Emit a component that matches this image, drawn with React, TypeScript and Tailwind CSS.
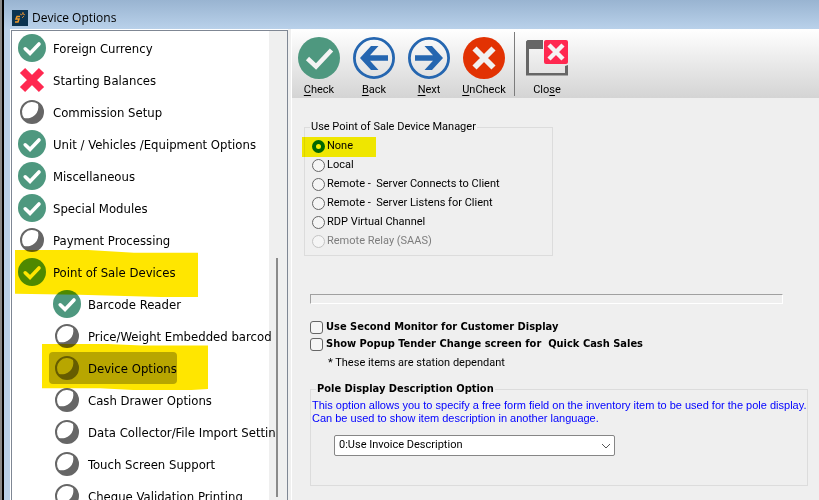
import React, { useState } from 'react';

type Status = 'done' | 'failed' | 'pending';

interface TreeItem {
  label: string;
  status: Status;
  child?: boolean;
}

const treeItems: TreeItem[] = [
  { label: 'Foreign Currency', status: 'done' },
  { label: 'Starting Balances', status: 'failed' },
  { label: 'Commission Setup', status: 'pending' },
  { label: 'Unit / Vehicles /Equipment Options', status: 'done' },
  { label: 'Miscellaneous', status: 'done' },
  { label: 'Special Modules', status: 'done' },
  { label: 'Payment Processing', status: 'pending' },
  { label: 'Point of Sale Devices', status: 'done' },
  { label: 'Barcode Reader', status: 'done', child: true },
  { label: 'Price/Weight Embedded barcod', status: 'pending', child: true },
  { label: 'Device Options', status: 'pending', child: true },
  { label: 'Cash Drawer Options', status: 'pending', child: true },
  { label: 'Data Collector/File Import Settin', status: 'pending', child: true },
  { label: 'Touch Screen Support', status: 'pending', child: true },
  { label: 'Cheque Validation Printing', status: 'pending', child: true },
];

const managers = [
  { value: 'none', label: 'None' },
  { value: 'local', label: 'Local' },
  { value: 'connects', label: 'Remote -  Server Connects to Client' },
  { value: 'listens', label: 'Remote -  Server Listens for Client' },
  { value: 'rdp', label: 'RDP Virtual Channel' },
  { value: 'relay', label: 'Remote Relay (SAAS)', disabled: true },
];

const StatusIcon: React.FC<{ status: Status }> = ({ status }) => {
  if (status === 'done') {
    return (
      <svg viewBox="0 0 28 28" className="h-7 w-7 shrink-0">
        <circle cx="14" cy="14" r="14" fill="#4e987f" />
        <path d="M7.2 14.8l4.8 4.6 9-9.4" fill="none" stroke="#fff" strokeWidth="3.6" strokeLinecap="round" />
      </svg>
    );
  }
  if (status === 'failed') {
    return (
      <svg viewBox="0 0 28 28" className="h-7 w-7 shrink-0">
        <path d="M4.5 4.5l19 19M23.5 4.5l-19 19" stroke="#ff2850" strokeWidth="7.4" />
      </svg>
    );
  }
  return (
    <svg viewBox="0 0 28 28" className="h-7 w-7 shrink-0">
      <path
        d="M2 14a12 12 0 1 0 24 0a12 12 0 1 0 -24 0zM20 6A10 10 0 0 0 6 20A11.5 11.5 0 0 0 20 6z"
        fill="#666"
        fillRule="evenodd"
      />
    </svg>
  );
};

const CheckIcon = () => (
  <svg viewBox="0 0 42 42" className="h-[42px] w-[42px]">
    <circle cx="21" cy="21" r="21" fill="#4e987f" />
    <path d="M9.5 21.5l8.5 8 15.5-16.5" fill="none" stroke="#f4f4f4" strokeWidth="4.6" />
  </svg>
);

const ArrowIcon: React.FC<{ flip?: boolean }> = ({ flip }) => (
  <svg viewBox="0 0 42 42" className="h-[42px] w-[42px]">
    <circle cx="21" cy="21" r="19.6" fill="none" stroke="#2566b0" strokeWidth="2.8" />
    <path
      transform={flip ? 'rotate(180 21 21)' : undefined}
      d="M7 21L18 9h7.5l-8.5 9.2h18v5.6H17L25.5 33H18z"
      fill="#2566b0"
    />
  </svg>
);

const UncheckIcon = () => (
  <svg viewBox="0 0 42 42" className="h-[42px] w-[42px]">
    <circle cx="21" cy="21" r="21" fill="#e23203" />
    <path d="M11.5 11.5l19 19M30.5 11.5l-19 19" stroke="#f1f1f1" strokeWidth="5.8" />
  </svg>
);

const CloseIcon = () => (
  <svg viewBox="0 0 42 42" className="h-[42px] w-[42px]">
    <path d="M1.5 3H17v9H3v24h36v-7l3-1v10.5H0V4.5z" fill="#666" />
    <rect x="18" y="3" width="24" height="24" rx="2" fill="#ff2850" />
    <path d="M23 8l14 14M37 8L23 22" stroke="#f4f4f4" strokeWidth="4.4" />
  </svg>
);

interface ToolButtonProps {
  before?: string;
  hotkey: string;
  after: string;
  children: React.ReactNode;
}

const ToolButton: React.FC<ToolButtonProps> = ({ before, hotkey, after, children }) => (
  <button type="button" className="flex w-[55px] flex-col items-center gap-[3px] pt-2 pr-px">
    {children}
    <span className="whitespace-nowrap leading-4">
      {before}
      <u className="underline-offset-2">{hotkey}</u>
      {after}
    </span>
  </button>
);

export default function App() {
  const [selected, setSelected] = useState('Device Options');
  const [manager, setManager] = useState('none');

  return (
    <div className="h-screen overflow-hidden border-l-2 border-[#8a8a8a] font-[Roboto,sans-serif] text-[11px] text-black">
      <div className="flex h-full flex-col border-l-2 border-black bg-[#b9d1ea]">
        <header className="flex h-[29px] shrink-0 items-center gap-1 bg-linear-to-b from-[#99b4d1] to-[#b9d1ea] pt-1.5 pl-2">
          <svg viewBox="0 0 16 16" className="h-4 w-4">
            <rect width="16" height="16" fill="#0b3350" />
            <path d="M8 6.5H5L4 9H7L6 12H3" fill="none" stroke="#f09a2a" strokeWidth="1.5" />
            <path d="M8 4l2 1M11 2v3M12 6l-2 2M10 3l3 2" stroke="#c98436" strokeWidth="1" />
          </svg>
          <h1 className="font-['Open_Sans',sans-serif] text-[12px]">Device Options</h1>
        </header>

        <div className="flex min-h-0 flex-1 pl-1.5">
          <nav className="flex w-[278px] shrink-0 bg-white pt-px pl-px">
            <div className="flex flex-1 overflow-hidden border-x border-t border-[#7f8794] bg-[#efefef]">
              <ul className="w-[257px] shrink-0 bg-white pt-px font-['DejaVu_Sans_Condensed',sans-serif] text-[13px]">
                {treeItems.map(item => (
                  <li key={item.label} className={item.child ? 'relative flex h-8 pl-[37px]' : 'relative flex h-8 pl-0.5'}>
                    <button
                      type="button"
                      onClick={() => setSelected(item.label)}
                      className={
                        item.label === selected
                          ? 'flex items-center gap-[7px] rounded-sm bg-[#b8b8b8] pl-1 whitespace-nowrap'
                          : 'flex items-center gap-[7px] pl-1 whitespace-nowrap'
                      }
                    >
                      <StatusIcon status={item.status} />
                      <span className="pt-0.5">{item.label}</span>
                    </button>
                    {item.label === 'Point of Sale Devices' && (
                      <span className="pointer-events-none absolute -top-1.5 left-[3px] z-10 h-[47px] w-[183px] bg-[#ffe600] mix-blend-multiply [clip-path:polygon(0_0,40%_0,65%_6%,100%_6%,100%_100%,80%_100%,35%_95%,0_93%)]" />
                    )}
                    {item.label === 'Device Options' && (
                      <span className="pointer-events-none absolute -top-2 left-[30px] z-10 h-[46px] w-[166px] bg-[#ffe600] mix-blend-multiply [clip-path:polygon(0_0,40%_0,60%_3%,100%_3%,100%_98%,90%_100%,55%_100%,35%_96%,0_96%)]" />
                    )}
                  </li>
                ))}
              </ul>
              <div className="mt-[227px] mb-[3px] ml-[7px] w-0.5 bg-[#8a8a8a]" />
            </div>
          </nav>

          <main className="min-w-0 flex-1 border-l-[3px] border-[#efefef] bg-[#efefef]">
            <div className="h-full border-l border-white">
              <div className="flex h-[69px] bg-linear-to-b from-white to-[#d4d4d4]">
                <ToolButton hotkey="C" after="heck">
                  <CheckIcon />
                </ToolButton>
                <ToolButton hotkey="B" after="ack">
                  <ArrowIcon />
                </ToolButton>
                <ToolButton hotkey="N" after="ext">
                  <ArrowIcon flip />
                </ToolButton>
                <ToolButton hotkey="U" after="nCheck">
                  <UncheckIcon />
                </ToolButton>
                <div className="mt-[3px] mr-[5px] mb-0.5 ml-0.5 w-px bg-[#7c7c7c]" />
                <ToolButton before="Clo" hotkey="s" after="e">
                  <CloseIcon />
                </ToolButton>
              </div>

              <div className="pt-[22px] pr-[11px] pl-[18px]">
                <fieldset className="-ml-1.5 w-[249px] border border-[#dcdcdc] px-[7px] pt-[3px] pb-1">
                  <legend className="-ml-0.5 px-px leading-[14px]">Use Point of Sale Device Manager</legend>
                  {managers.map(option => (
                    <label
                      key={option.value}
                      className={
                        option.disabled
                          ? 'relative flex h-[19px] items-center gap-0.5 whitespace-pre text-[#7d7d7d]'
                          : 'relative flex h-[19px] items-center gap-0.5 whitespace-pre'
                      }
                    >
                      <input
                        type="radio"
                        name="manager"
                        value={option.value}
                        checked={manager === option.value}
                        disabled={option.disabled}
                        onChange={() => setManager(option.value)}
                        className="h-[13px] w-[13px] appearance-none rounded-full border border-[#666] bg-[#f5f5f5] checked:border-4 checked:border-[#006a6a] disabled:border-[#c4c4c4]"
                      />
                      {option.label}
                      {option.value === 'none' && (
                        <span className="pointer-events-none absolute top-0 -left-2.5 h-5 w-[74px] bg-[#fff600] mix-blend-multiply" />
                      )}
                    </label>
                  ))}
                </fieldset>

                <div className="mt-[38px] mr-[25px] h-2.5 border border-t-[#a0a0a0] border-r-white border-b-white border-l-[#a0a0a0]" />

                <div className="mt-[15px] font-['DejaVu_Sans_Condensed',sans-serif] font-bold">
                  <label className="flex h-[17px] items-center gap-[3px]">
                    <input type="checkbox" className="h-[13px] w-[13px] appearance-none rounded-[3px] border border-[#666] bg-[#f5f5f5]" />
                    Use Second Monitor for Customer Display
                  </label>
                  <label className="flex h-[17px] items-center gap-[3px] whitespace-pre">
                    <input type="checkbox" className="h-[13px] w-[13px] appearance-none rounded-[3px] border border-[#666] bg-[#f5f5f5]" />
                    Show Popup Tender Change screen for  Quick Cash Sales
                  </label>
                </div>
                <p className="mt-0.5 pl-[18px] leading-4">* These items are station dependant</p>

                <fieldset className="mt-[11px] min-w-0 border border-[#dcdcdc] px-px pt-[3px] pb-[29px]">
                  <legend className="ml-1 px-px font-['DejaVu_Sans_Condensed',sans-serif] leading-[14px] font-bold">
                    Pole Display Description Option
                  </legend>
                  <p className="font-['Liberation_Sans',sans-serif] leading-[13px] whitespace-nowrap text-[#0000ff]">
                    This option allows you to specify a free form field on the inventory item to be used for the pole display.
                    <br />
                    Can be used to show item description in another language.
                  </p>
                  <div className="relative mt-2.5 ml-[22px] w-[281px]">
                    <select
                      aria-label="Pole Display Description Option"
                      className="block h-[21px] w-full appearance-none rounded-xs border border-[#868686] bg-white px-1"
                    >
                      <option>0:Use Invoice Description</option>
                    </select>
                    <svg viewBox="0 0 10 6" className="pointer-events-none absolute top-2 right-1 h-1.5 w-2.5">
                      <path d="M1 1l4 4 4-4" fill="none" stroke="#555" />
                    </svg>
                  </div>
                </fieldset>
              </div>
            </div>
          </main>
        </div>
      </div>
    </div>
  );
}
